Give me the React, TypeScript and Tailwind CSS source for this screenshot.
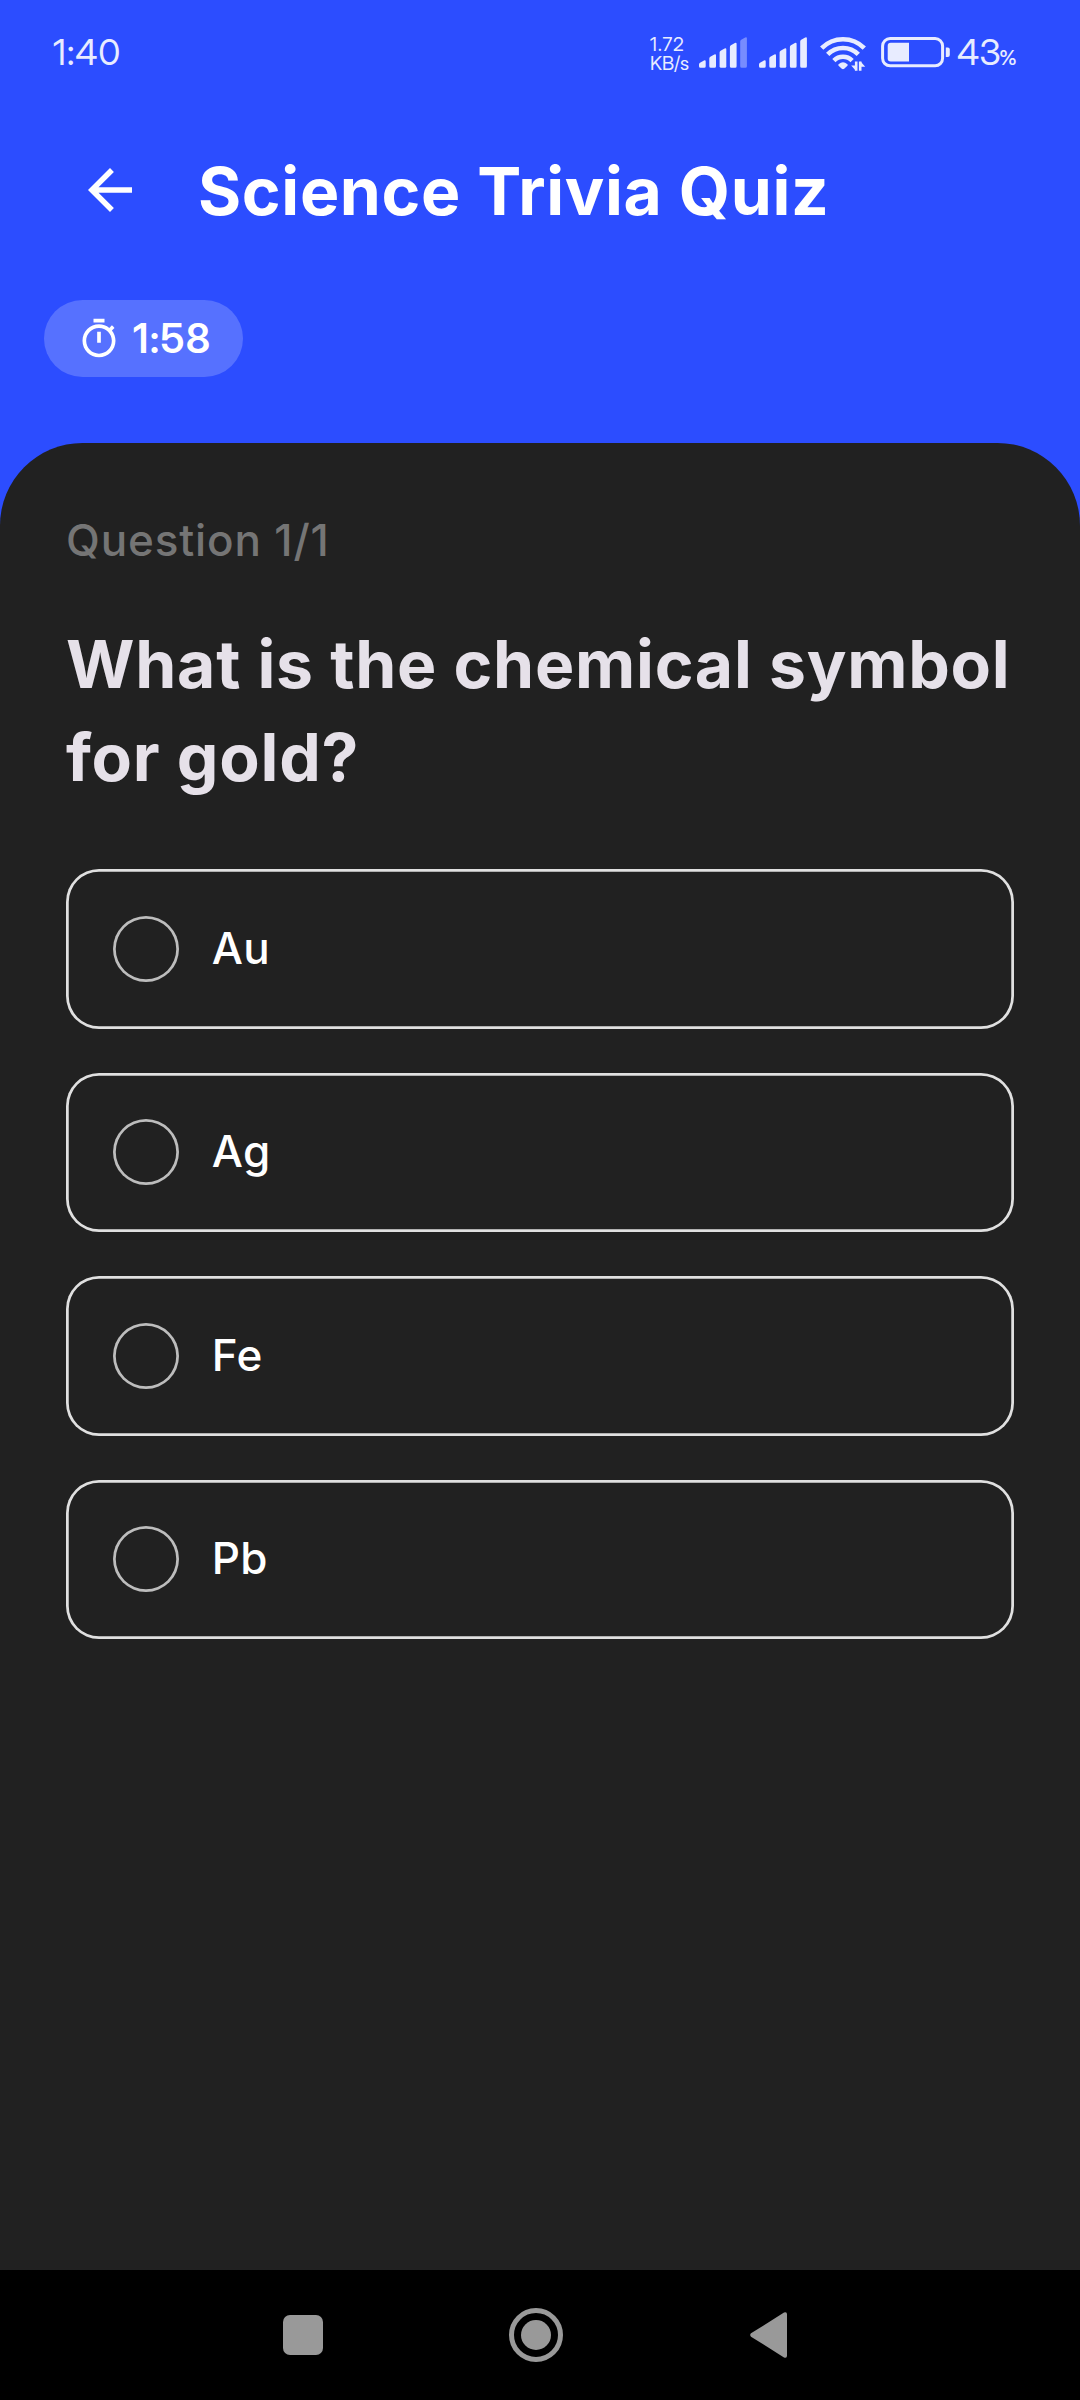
import React from "react";

const OPTIONS = ["Au", "Ag", "Fe", "Pb"];

function SignalBars({ level }: { level: number }) {
  const tops = [23, 17, 11, 5.5, 0];
  return (
    <svg width="48" height="31" viewBox="0 0 48 31" fill="#e8ecff">
      {tops.map((t, i) => {
        const x = i * 10.3;
        return (
          <path
            key={i}
            opacity={i < level ? 1 : 0.4}
            d={`M${x} ${t + 4.6}q0-1.2 1-1.8l4-2.4q1.7-.8 1.7 1V29.2q0 1.5-1.5 1.5h-3.7q-1.5 0-1.5-1.5z`}
          />
        );
      })}
    </svg>
  );
}

function WifiIcon() {
  return (
    <svg width="48" height="37" viewBox="0 0 48 37" fill="none" stroke="#e8ecff">
      <g strokeWidth="4.6">
        <path d="M1.7 13.2a29.8 29.8 0 0 1 42.6 0" />
        <path d="M7.7 19.4a21.4 21.4 0 0 1 30.6 0" />
        <path d="M13.9 25.6a12.8 12.8 0 0 1 18.2 0" />
      </g>
      <path d="M18.6 29.2q4.4-4 8.8 0q.8.8 0 1.6l-3.2 3q-1.2.9-2.4 0l-3.2-3q-.8-.8 0-1.6z" fill="#e8ecff" stroke="none" />
      <path d="M36.2 26.4v9.4M40.2 35.8v-9.4" strokeWidth="2.6" />
      <path d="M35.8 35.8l-4.6-5.4h4.6zM40.6 26.4l4.6 5.4h-4.6z" fill="#e8ecff" stroke="none" />
    </svg>
  );
}

function BatteryIcon() {
  return (
    <svg width="70" height="31" viewBox="0 0 70 31" fill="#e8ecff">
      <rect x="1.6" y="1.6" width="60" height="27.2" rx="7.5" fill="none" stroke="#e8ecff" strokeWidth="3" />
      <path d="M9.7 5.8H28v18.8H9.7q-3 0-3-3V8.8q0-3 3-3z" />
      <path d="M64.8 10.4h2q2 0 2 2v5.6q0 2-2 2h-2z" />
    </svg>
  );
}

function StatusBar() {
  return (
    <div className="flex h-[105px] justify-between pl-[53px] pr-[63px] text-[#e8ecff]">
      <div className="mt-[30px] text-[36px] leading-[44px] tracking-[0.7px]">1:40</div>
      <div className="flex">
        <div className="mt-[35px] w-[49px] whitespace-nowrap text-[19px] leading-[19px]">
          <div className="tracking-[0.8px]">1.72</div>
          <div className="tracking-[-0.1px]">KB/s</div>
        </div>
        <div className="mt-[37px] flex w-[182px]">
          <div className="w-[60px]"><SignalBars level={4} /></div>
          <div className="w-[61px]"><SignalBars level={5} /></div>
          <div className="-mt-[2px]"><WifiIcon /></div>
        </div>
        <div className="mt-[37px] w-[76px]"><BatteryIcon /></div>
        <div className="mt-[30px] flex items-baseline leading-[44px]">
          <span className="w-[42px] text-[36px]">43</span>
          <span className="w-[18px] text-[20.5px] font-medium">%</span>
        </div>
      </div>
    </div>
  );
}

function Option({ label }: { label: string }) {
  return (
    <button className="flex h-[159.5px] w-full items-center gap-[33px] rounded-[33px] pl-[46.75px] shadow-[inset_0_0_0_2.75px_#e0e0e0]">
      <span className="size-[66px] rounded-full shadow-[inset_0_0_0_2.75px_#bdbdbd]" />
      <span className="pb-[2px] font-['Inter',sans-serif] text-[44px] font-medium leading-[66px] tracking-[0.3px] text-white">
        {label}
      </span>
    </button>
  );
}

function NavBar() {
  return (
    <div className="flex h-[130px] items-center bg-black pl-[283px]">
      <div className="size-[40px] rounded-[7px] bg-[#999999]" />
      <div className="ml-[186px] flex size-[54px] items-center justify-center rounded-full border-[5px] border-[#999999]">
        <div className="size-[30px] rounded-full bg-[#999999]" />
      </div>
      <svg className="ml-[187px]" width="38" height="46" viewBox="0 0 38 46" fill="#999999">
        <path d="M1 21.3 34 .6Q37 -.4 37 2.2V43.8q0 2.6-3 1.6L1 24.7q-1.6-1.7 0-3.4z" />
      </svg>
    </div>
  );
}

export default function App() {
  return (
    <div className="flex h-[2400px] w-[1080px] flex-col overflow-hidden bg-[#2c4dff] font-['Inter_Display','Inter',sans-serif]">
      <StatusBar />
      <header className="flex h-[170px] items-center gap-[55px] pl-[77px]">
        <svg width="66" height="66" viewBox="0 0 24 24" fill="white">
          <path d="M20 11H7.83l5.59-5.59L12 4l-8 8 8 8 1.41-1.41L7.83 13H20v-2z" />
        </svg>
        <h1 className="whitespace-nowrap pt-[2px] font-['Inter',sans-serif] text-[66px] font-bold leading-[84px] tracking-[0.65px] text-white">
          Science Trivia Quiz
        </h1>
      </header>
      <div className="ml-[44px] mt-[25px] flex h-[77px] w-[199px] items-center gap-[12px] self-start rounded-full bg-[#5671ff] pl-[33px]">
        <svg className="shrink-0" width="44" height="44" viewBox="0 0 24 24" fill="white">
          <path d="M15 1H9v2h6V1zm-4 13h2V8h-2v6zm8.03-6.61 1.42-1.42c-.43-.51-.9-.99-1.41-1.41l-1.42 1.42C16.07 4.74 14.12 4 12 4c-4.97 0-9 4.03-9 9s4.02 9 9 9 9-4.03 9-9c0-2.12-.74-4.07-1.97-5.61zM12 20c-3.87 0-7-3.13-7-7s3.13-7 7-7 7 3.13 7 7-3.13 7-7 7z" />
        </svg>
        <span className="text-[40.5px] font-semibold leading-[48px] tracking-[1.3px] text-white">1:58</span>
      </div>
      <main className="mt-[66px] flex-1 rounded-t-[82.5px] bg-[#212121] px-[66px] pt-[66px]">
        <p className="font-['Inter',sans-serif] text-[44px] font-medium leading-[62px] tracking-[0.85px] text-[#757575]">
          Question 1/1
        </p>
        <h2 className="mt-[47px] whitespace-nowrap font-['Inter',sans-serif] text-[66px] font-bold leading-[93px] tracking-[0.75px] text-[#e6e1e9]">
          What is the chemical symbol
          <br />
          for gold?
        </h2>
        <div className="mt-[65px] flex flex-col gap-[44px]">
          {OPTIONS.map((o) => (
            <Option key={o} label={o} />
          ))}
        </div>
      </main>
      <NavBar />
    </div>
  );
}
